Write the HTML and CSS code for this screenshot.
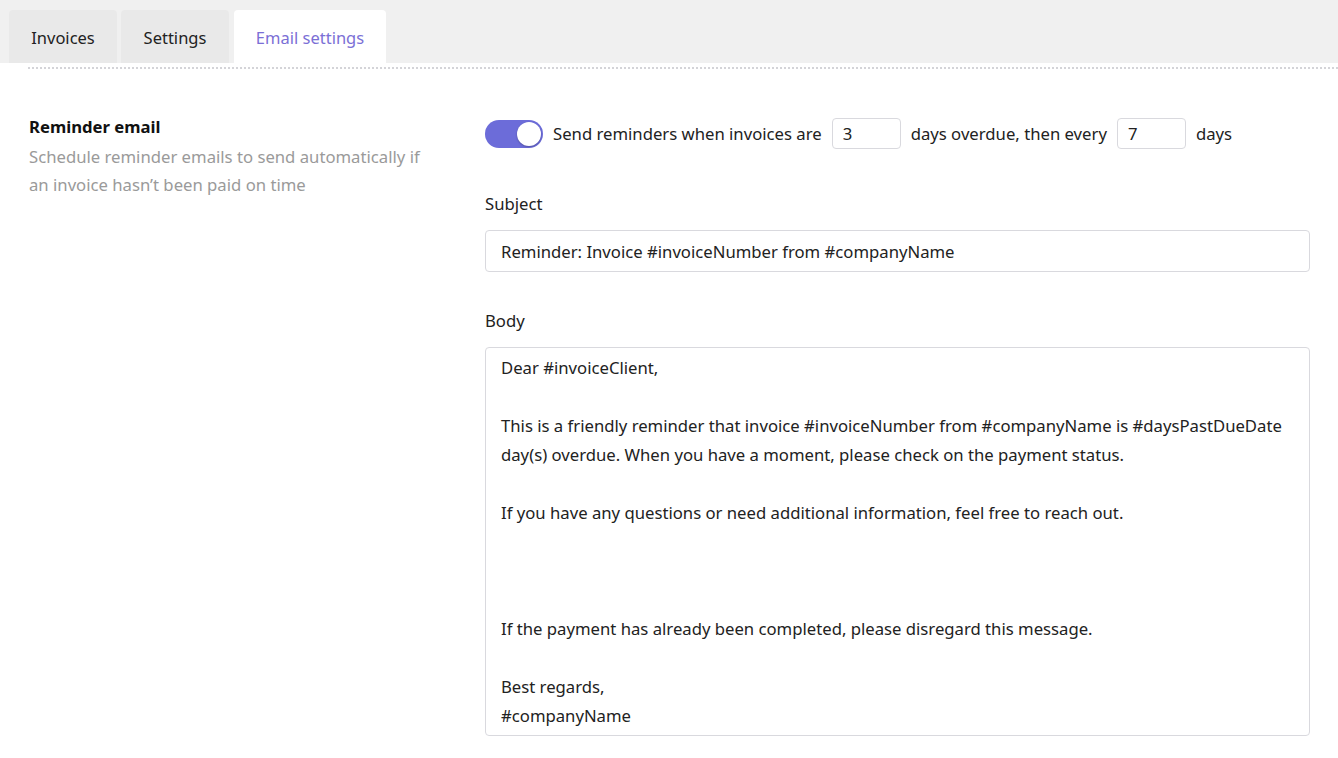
FILE: index.html
```html
<!DOCTYPE html>
<html lang="en">
<head>
  <meta charset="UTF-8">
  <title>Email settings</title>
  <link rel="stylesheet" href="styles.css">
</head>
<body>

  <!-- Tabs -->
  <div class="tabs">
    <div class="tab">Invoices</div>
    <div class="tab">Settings</div>
    <div class="tab active">Email settings</div>
  </div>
  <div class="divider"></div>

  <!-- Reminder email section -->
  <div class="row">
    <div class="side">
      <div class="side-title">Reminder email</div>
      <div class="side-desc">Schedule reminder emails to send automatically if an invoice hasn’t been paid on time</div>
    </div>

    <div class="main">
      <div class="schedule">
        <label class="switch">
          <input type="checkbox" checked>
          <span class="slider"></span>
        </label>
        <span>Send reminders when invoices are</span>
        <input class="num" type="text" value="3">
        <span>days overdue, then every</span>
        <input class="num" type="text" value="7">
        <span>days</span>
      </div>

      <div class="field">
        <label class="field-label">Subject</label>
        <input class="text-input" type="text" value="Reminder: Invoice #invoiceNumber from #companyName">
      </div>

      <div class="field">
        <label class="field-label">Body</label>
        <textarea class="text-area">Dear #invoiceClient,

This is a friendly reminder that invoice #invoiceNumber from #companyName is #daysPastDueDate day(s) overdue. When you have a moment, please check on the payment status.

If you have any questions or need additional information, feel free to reach out.



If the payment has already been completed, please disregard this message.

Best regards,
#companyName</textarea>
      </div>
    </div>
  </div>

</body>
</html>
```

FILE: styles.css
```css
body {
  font-family: "Noto Sans", Arial, sans-serif;
  font-size: 16.7px;
  color: #222;
  margin: 0;
  background: #fff;
}

/* Tabs */
.tabs {
  display: flex;
  gap: 4px;
  background: #f0f0f0;
  padding: 10px 0 0 9px;
  height: 53px;
}

.tab {
  width: 108px;
  box-sizing: border-box;
  padding-top: 1px;
  display: flex;
  align-items: center;
  justify-content: center;
  font-size: 16.5px;
  background: #e9e9e9;
  border-radius: 4px 4px 0 0;
  color: #222;
}

.tab.active {
  width: 152px;
  margin-left: 1px;
  background: #fff;
  color: #7b6fd6;
}

.divider {
  margin: 4px 0 0 28px;
  border-top: 2px dotted #d4d4d8;
}

/* Section row */
.row {
  display: flex;
  padding: 46px 28px 0 29px;
}

.side {
  width: 420px;
  flex-shrink: 0;
  margin-right: 36px;
}

.side-title {
  font-weight: bold;
  color: #111;
  line-height: 24px;
}

.side-desc {
  color: #9a9a9a;
  line-height: 28px;
  margin-top: 4px;
  max-width: 400px;
}

.main {
  flex: 1;
}

.schedule {
  display: flex;
  align-items: center;
  gap: 10px;
  margin-top: 3px;
}

.switch {
  position: relative;
  width: 58px;
  height: 28px;
  flex-shrink: 0;
}

.switch input {
  display: none;
}

.slider {
  position: absolute;
  inset: 0;
  background: #6c6cd9;
  border-radius: 14px;
}

/* knob sits over the track */
.slider::after {
  content: "";
  position: absolute;
  top: 2px;
  right: 2px;
  width: 24px;
  height: 24px;
  border-radius: 50%;
  background: #fff;
  box-shadow: 0 1px 2px rgba(0,0,0,0.25);
}

.num {
  width: 69px;
  height: 31px;
  box-sizing: border-box;
  border: 1px solid #d9d9de;
  border-radius: 4px;
  padding: 0 10px;
  font: inherit;
  color: #222;
}

.field {
  margin-top: 43px;
}

.field + .field {
  margin-top: 37px;
}

.field-label {
  display: block;
  line-height: 24px;
  margin-bottom: 14px;
}

.text-input {
  display: block;
  width: 100%;
  height: 42px;
  box-sizing: border-box;
  border: 1px solid #d9d9de;
  border-radius: 4px;
  padding: 0 15px;
  font: inherit;
  color: #222;
}

.text-area {
  display: block;
  width: 100%;
  height: 389px;
  box-sizing: border-box;
  border: 1px solid #d9d9de;
  border-radius: 4px;
  padding: 5px 15px;
  font: inherit;
  line-height: 29px;
  color: #222;
  resize: none;
}
```
